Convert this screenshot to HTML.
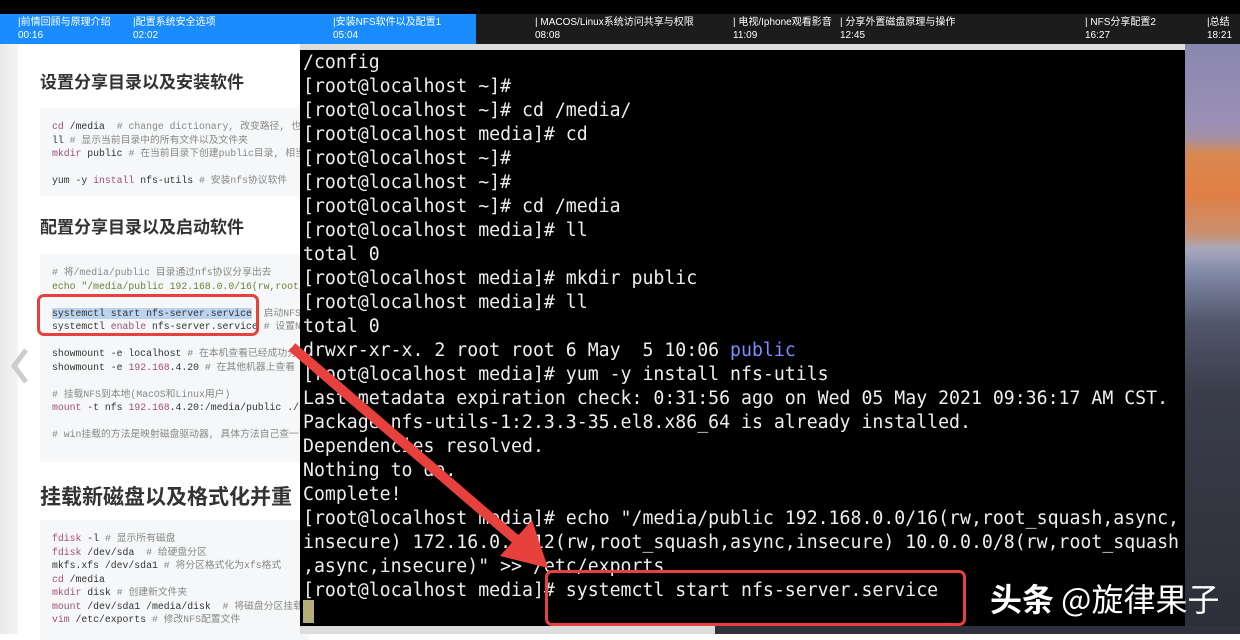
<!DOCTYPE html>
<html><head><meta charset="utf-8"><style>
*{margin:0;padding:0;box-sizing:border-box}
body{width:1240px;height:634px;overflow:hidden;position:relative;background:#fff;font-family:"Liberation Sans","Noto Sans CJK SC",sans-serif}
.abs{position:absolute}
#top{left:0;top:0;width:1240px;height:14px;background:#000}
#bar{left:0;top:14px;width:1240px;height:30px;background:#1c1c1c;color:#fff;font-size:10px;line-height:13px}
#blue{left:0;top:0;width:476px;height:30px;background:#1a8cff}
.ch{position:absolute;top:2px;white-space:nowrap}
#left{left:0;top:44px;width:300px;height:590px;background:linear-gradient(90deg,#eaeaea 0,#f3f3f3 17px,#fff 19px)}
.code{position:absolute;left:40px;width:270px;background:#f6f7f8;font-family:"Liberation Mono","Noto Sans CJK SC",monospace;font-size:9.8px;line-height:13.5px;color:#333;padding:12px 12px;white-space:pre}
.h{position:absolute;left:40px;font-weight:bold;color:#333;white-space:nowrap}
.k{color:#a0507a}.c{color:#888}.s{color:#6f7f3a}
#term{left:300px;top:44px;width:885px;height:582px;background:#000;overflow:hidden}
#tb{left:0;top:0;width:885px;height:6px;background:#ddd}
#tt{position:absolute;left:3px;font-family:"DejaVu Sans Mono","Liberation Mono",monospace;font-size:18.2px;line-height:24px;color:#eee;white-space:pre;letter-spacing:0}
#right{left:1185px;top:44px;width:55px;height:590px;background:linear-gradient(180deg,#8a87b0 0,#9a90b5 80px,#a890a0 95px,#d98850 110px,#e07f45 150px,#c99070 190px,#a8a8bd 205px,#7f88a5 230px,#50566a 280px,#3a3d4a 350px,#2c2e38 590px)}
#bottom{left:300px;top:626px;width:940px;height:8px;background:linear-gradient(90deg,#ddd 0,#ddd 415px,#2f313c 415px)}
</style></head><body>
<div class="abs" id="left">
<div class="h" style="top:24px;font-size:17px">设置分享目录以及安装软件</div>
<div class="code" style="top:64px;height:88px"><span class="k">cd</span> /media  <span class="c"># change dictionary, 改变路径, 也就</span>
ll <span class="c"># 显示当前目录中的所有文件以及文件夹</span>
<span class="k">mkdir</span> public <span class="c"># 在当前目录下创建public目录, 相当</span>

yum -y <span class="k">install</span> nfs-utils <span class="c"># 安装nfs协议软件</span></div>
<div class="h" style="top:169px;font-size:17px">配置分享目录以及启动软件</div>
<div class="code" style="top:210px;height:208px"><span class="c"># 将/media/public 目录通过nfs协议分享出去</span>
<span class="s">echo "/media/public 192.168.0.0/16(rw,root_</span>

<span style="background:#bcd3ee">systemctl start nfs-server.service</span>  <span class="c">启动NFS</span>
systemctl <span class="k">enable</span> nfs-server.service <span class="c"># 设置NF</span>

showmount -e localhost <span class="c"># 在本机查看已经成功分享</span>
showmount -e <span class="k">192.168</span>.4.20 <span class="c"># 在其他机器上查看</span>

<span class="c"># 挂载NFS到本地(MacOS和Linux用户)</span>
<span class="k">mount</span> -t nfs <span class="k">192.168</span>.4.20:/media/public ./n

<span class="c"># win挂载的方法是映射磁盘驱动器, 具体方法自己查一下</span></div>
<div class="h" style="top:437px;font-size:21px">挂载新磁盘以及格式化并重</div>
<div class="code" style="top:476px;height:120px"><span class="k">fdisk</span> -l <span class="c"># 显示所有磁盘</span>
<span class="k">fdisk</span> /dev/sda  <span class="c"># 给硬盘分区</span>
mkfs.xfs /dev/sda1 <span class="c"># 将分区格式化为xfs格式</span>
<span class="k">cd</span> /media
<span class="k">mkdir</span> disk <span class="c"># 创建新文件夹</span>
<span class="k">mount</span> /dev/sda1 /media/disk  <span class="c"># 将磁盘分区挂载</span>
<span class="k">vim</span> /etc/exports <span class="c"># 修改NFS配置文件</span></div>
<div class="abs" style="left:37px;top:250px;width:222px;height:42px;border:3px solid #e8413d;border-radius:7px"></div>
<svg class="abs" style="left:6px;top:300px" width="26" height="44"><path d="M20 6 L8 22 L20 38" stroke="#ccc" stroke-width="5" fill="none"/></svg>
</div>
<div class="abs" id="right"></div>
<div class="abs" id="bottom"></div>
<div class="abs" id="term">
<div class="abs" id="tb"></div>
<div id="tt" style="top:7px">/config
[root@localhost ~]#
[root@localhost ~]# cd /media/
[root@localhost media]# cd
[root@localhost ~]#
[root@localhost ~]#
[root@localhost ~]# cd /media
[root@localhost media]# ll
total 0
[root@localhost media]# mkdir public
[root@localhost media]# ll
total 0
drwxr-xr-x. 2 root root 6 May  5 10:06 <span style="color:#7b8cff">public</span>
[root@localhost media]# yum -y install nfs-utils
Last metadata expiration check: 0:31:56 ago on Wed 05 May 2021 09:36:17 AM CST.
Package nfs-utils-1:2.3.3-35.el8.x86_64 is already installed.
Dependencies resolved.
Nothing to do.
Complete!
[root@localhost media]# echo "/media/public 192.168.0.0/16(rw,root_squash,async,
insecure) 172.16.0.0/12(rw,root_squash,async,insecure) 10.0.0.0/8(rw,root_squash
,async,insecure)" >> /etc/exports
[root@localhost media]# systemctl start nfs-server.service
</div>
<div class="abs" style="left:3px;top:556px;width:11px;height:23px;background:#b5b07a"></div>
<div class="abs" style="left:245px;top:526px;width:421px;height:56px;border:3px solid #e8413d;border-radius:7px"></div>
</div>
<svg class="abs" style="left:0;top:0" width="1240" height="634"><line x1="292" y1="347" x2="520" y2="543" stroke="#e8413d" stroke-width="10"/><polygon points="548,568 500,556 532,520" fill="#e8413d"/></svg>
<div class="abs" style="left:990px;top:578px;font-size:32px;color:#fff;font-family:'Noto Sans CJK SC',sans-serif;line-height:40px;white-space:nowrap"><b>头条</b> @旋律果子</div>
<div class="abs" id="top"></div>
<div class="abs" id="bar"><div class="abs" id="blue"></div>
<div class="ch" style="left:18px">|前情回顾与原理介绍<br>00:16</div>
<div class="ch" style="left:133px">|配置系统安全选项<br>02:02</div>
<div class="ch" style="left:333px">|安装NFS软件以及配置1<br>05:04</div>
<div class="ch" style="left:535px">| MACOS/Linux系统访问共享与权限<br>08:08</div>
<div class="ch" style="left:733px">| 电视/Iphone观看影音<br>11:09</div>
<div class="ch" style="left:840px">| 分享外置磁盘原理与操作<br>12:45</div>
<div class="ch" style="left:1085px">| NFS分享配置2<br>16:27</div>
<div class="ch" style="left:1207px">|总结<br>18:21</div>
</div>
</body></html>
